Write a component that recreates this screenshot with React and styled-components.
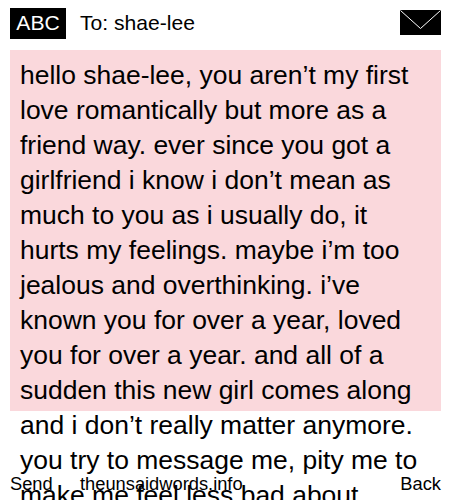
import React from "react";
import styled, { createGlobalStyle } from "styled-components";

const Global = createGlobalStyle`
  html, body { margin: 0; padding: 0; height: 500px; overflow: hidden; background: #fff; }
  body { font-family: "Liberation Sans", Arial, sans-serif; color: #000; }
`;
const Page = styled.div`
  position: relative;
  width: 450px;
  height: 500px;
  overflow: hidden;
  padding: 8px 9px 0 10px;
  box-sizing: border-box;
`;
const Header = styled.header`
  display: flex;
  align-items: flex-start;
  height: 42px;
`;
const Badge = styled.div`
  width: 56px;
  height: 31px;
  background: #000;
  color: #fff;
  font-size: 21.1px;
  line-height: 29px;
  text-align: center;
`;
const To = styled.div`
  margin-left: 14px;
  font-size: 21.1px;
  line-height: 29px;
  flex: 1;
`;
const Envelope = styled.svg`
  display: block;
  margin: 2px 0 0 0;
  width: 41px;
  height: 25px;
`;
const Message = styled.main`
  height: 361px;
  background: #fad8dc;
  padding: 8px 10px 0;
  box-sizing: border-box;
  font-size: 26.47px;
  line-height: 35px;
`;
const Footer = styled.footer`
  position: absolute;
  left: 10px;
  right: 9px;
  top: 472px;
  display: flex;
  justify-content: space-between;
  font-size: 18.3px;
  line-height: 24px;
`;
const Site = styled.span`
  position: absolute;
  left: 70px;
`;

export default function App() {
  return (
    <Page>
      <Global />
      <Header>
        <Badge>ABC</Badge>
        <To>To: shae-lee</To>
        <Envelope viewBox="0 0 41 25" aria-hidden="true">
          <rect width="41" height="25" fill="#000" />
          <path d="M0.5 0.5 L20.5 18.5 L40.5 0.5" fill="none" stroke="#fff" strokeWidth="1" />
        </Envelope>
      </Header>
      <Message>
        hello shae-lee, you aren’t my first love romantically but more as a friend way. ever since you got a girlfriend i know i don’t mean as much to you as i usually do, it hurts my feelings. maybe i’m too jealous and overthinking. i’ve known you for over a year, loved you for over a year. and all of a sudden this new girl comes along and i don’t really matter anymore. you try to message me, pity me to make me feel less bad about
      </Message>
      <Footer>
        <span>Send</span>
        <Site>theunsaidwords.info</Site>
        <span>Back</span>
      </Footer>
    </Page>
  );
}
